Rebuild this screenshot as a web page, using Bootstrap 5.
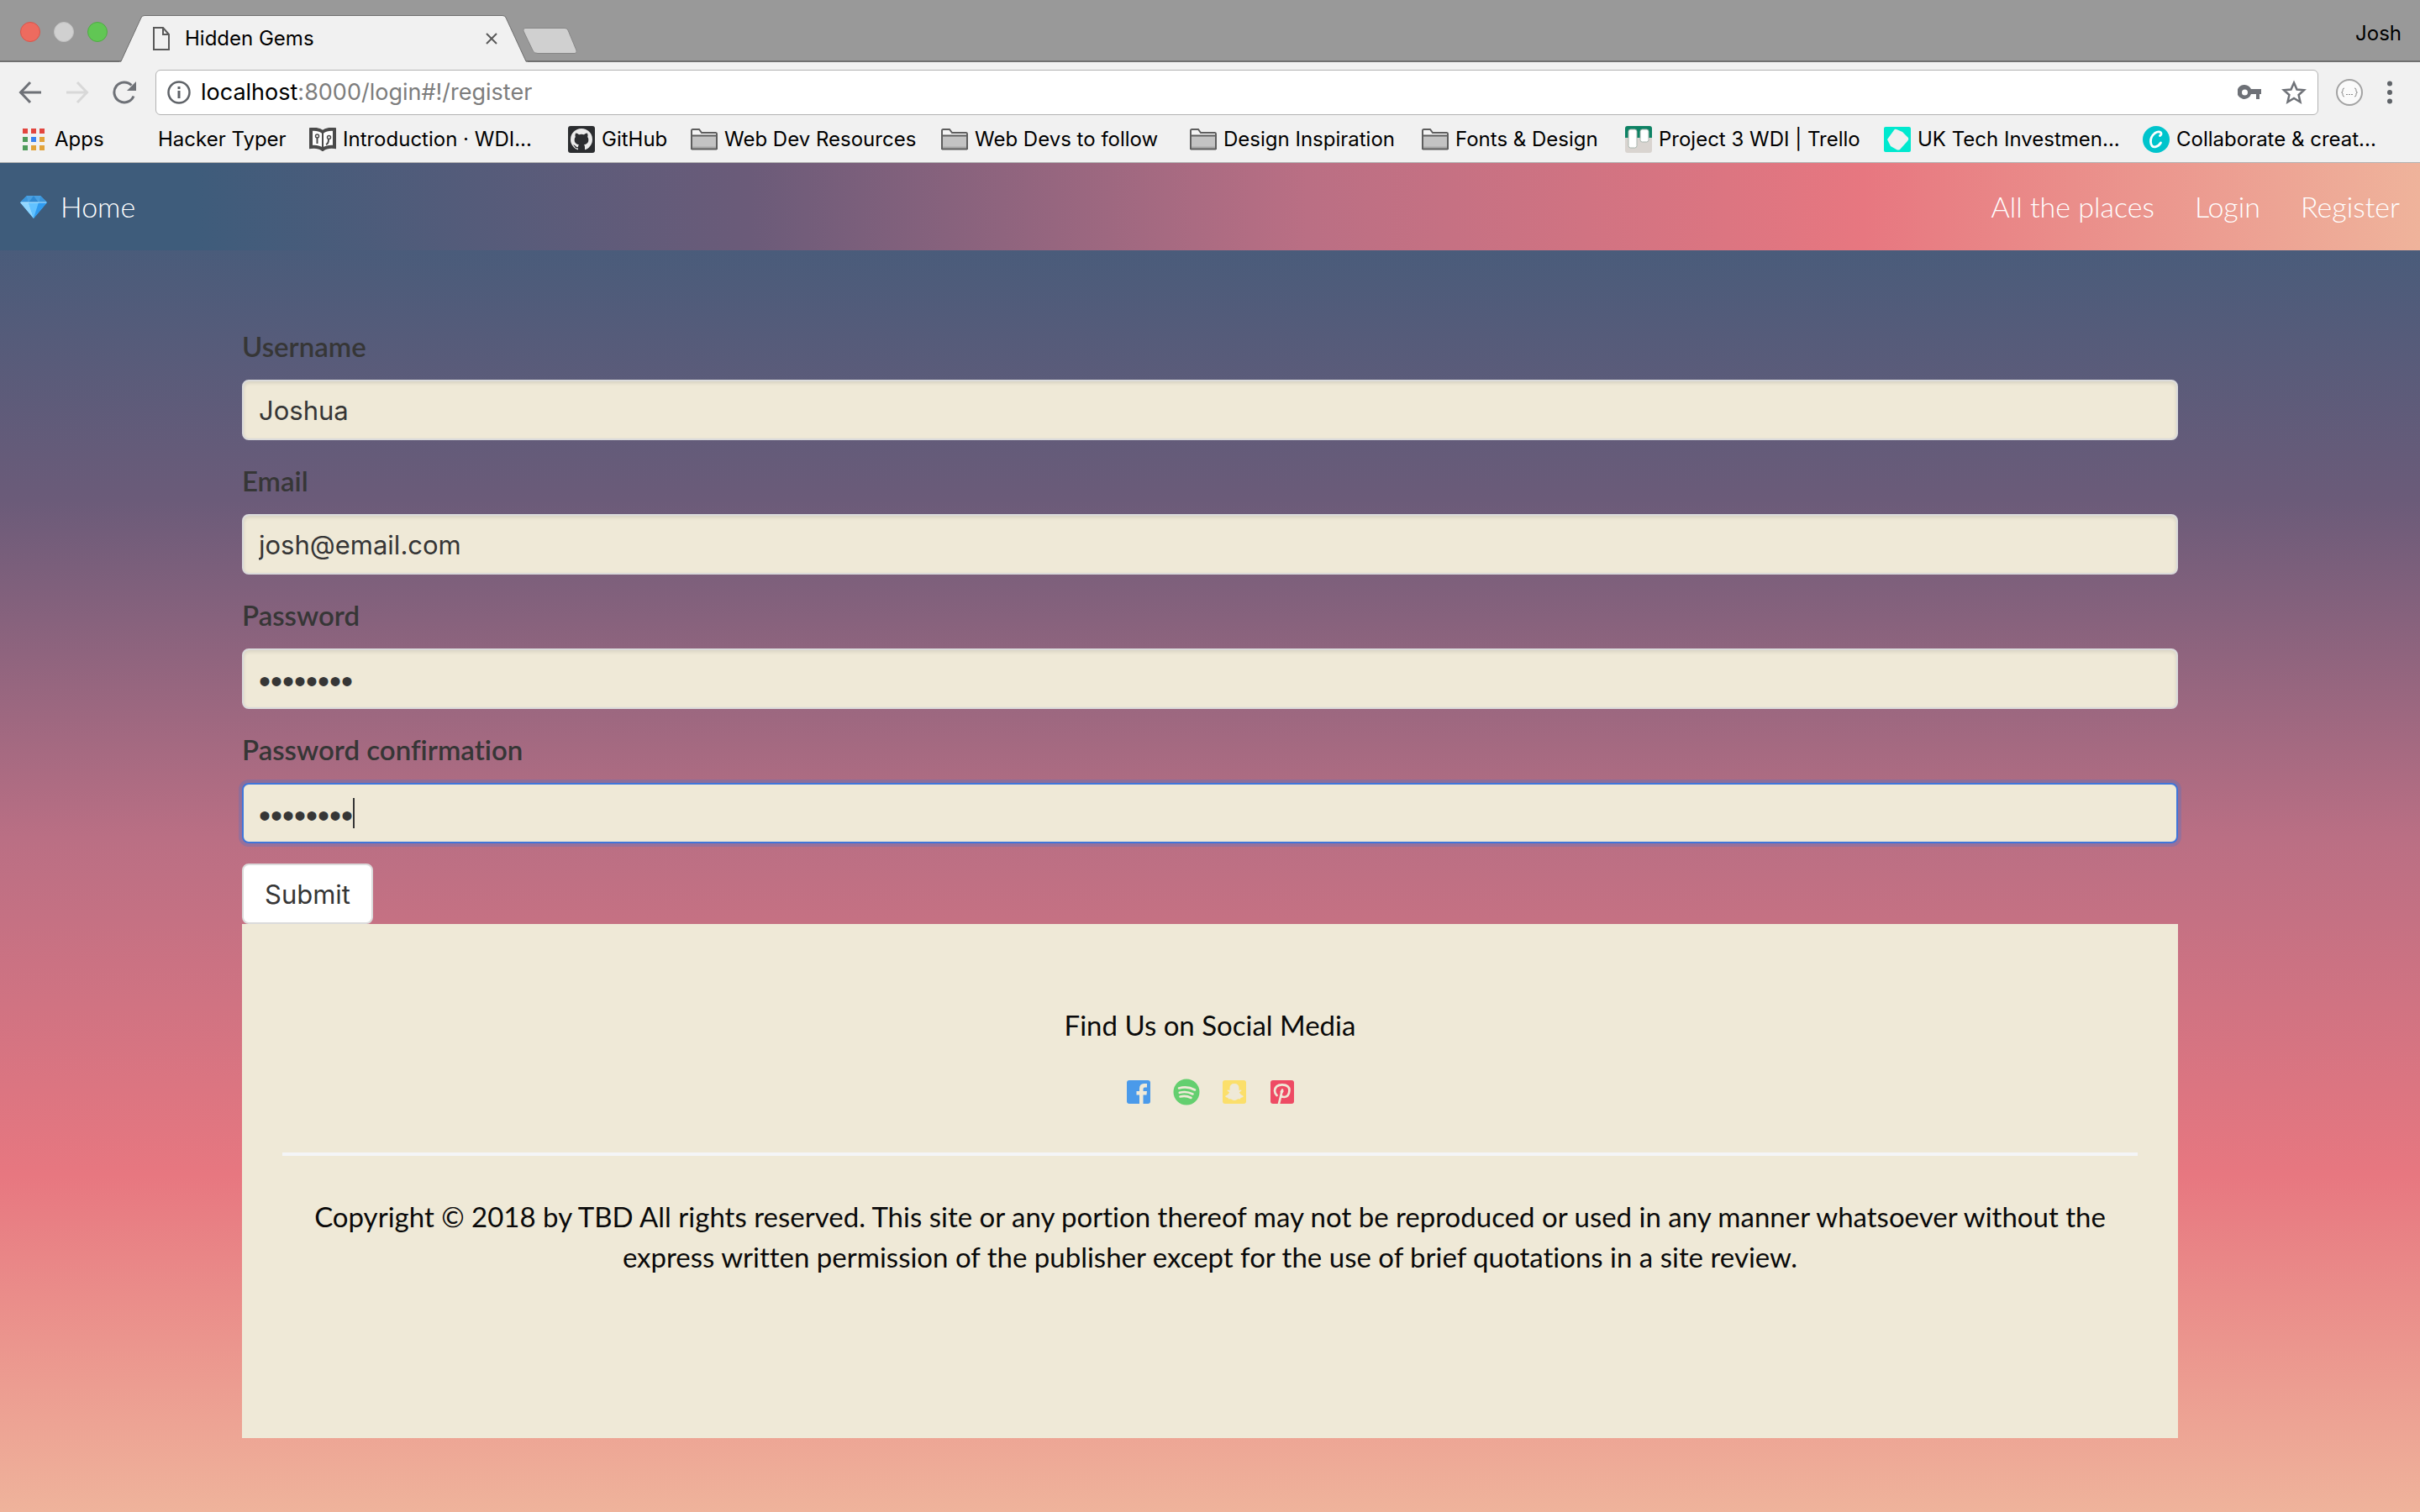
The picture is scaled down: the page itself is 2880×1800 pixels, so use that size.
<!DOCTYPE html>
<html lang="en">
<head>
<meta charset="utf-8">
<meta name="viewport" content="width=device-width, initial-scale=1">
<title>Hidden Gems</title>
<link href="https://cdn.jsdelivr.net/npm/bootstrap@5.3.0/dist/css/bootstrap.min.css" rel="stylesheet">
<style>
  :root { --ink: #363636; --sand: #efe9d7; --bar: #f1f1f1; --glyph: #6e7177; }
  body { font-family: Lato, "Open Sans", sans-serif; font-size: 33px; line-height: 48px; color: #0a0a0a; min-height: 100vh; font-variant-ligatures: none; }
  svg { display: block; flex: none; }

  .chrome-ui { font-family: Inter, Roboto, sans-serif; font-size: 24px; line-height: 32px; color: #000; }
  .tab-strip { height: 74px; background: #999; border-bottom: 2px solid #707070; padding: 18px 22px 0 24px; }
  .lights { gap: 16px; padding-top: 8px; }
  .light { width: 24px; height: 24px; border-radius: 50%; border: 1px solid #c0c0c0; background: #d0d0d0; }
  .light.stop { background: #ed6b5f; border-color: #d8554b; }
  .light.zoom { background: #61c654; border-color: #50ab45; }
  .page-tab { position: relative; width: 486px; height: 56px; margin-left: 14px; margin-bottom: -2px; }
  .page-tab .tab-shape { position: absolute; inset: 0; }
  .page-tab .tab-body { position: relative; height: 56px; padding: 0 36px 0 40px; gap: 18px; }
  .plain-btn { border: 0; padding: 0; background: none; color: inherit; line-height: inherit; }
  .new-tab { margin: 15px 0 0 -6px; }
  .profile { padding-top: 6px; }

  .toolbar { background: var(--bar); padding: 9px 32px 0 22px; }
  .nav-icons { width: 163px; gap: 24px; }
  .omnibox { height: 54px; background: #fff; border: 1px solid #b3b3b3; border-radius: 6px; padding: 0 13px; gap: 12px; font-size: 27px; line-height: 36px; }
  .omnibox .path { color: #7d7d7d; }
  .key-icon { margin-right: 12px; }
  .ext-icon { margin: 0 28px 0 21px; }
  .bookmarks { background: var(--bar); height: 57px; padding: 2px 20px 0 26px; border-bottom: 1px solid #b3b3b3;
    display: grid; grid-template-columns: 122px 220px 308px 146px 298px 296px 276px 242px 308px 308px 1fr; align-items: center; }
  .bookmarks a { display: flex; align-items: center; gap: 8px; color: #000; text-decoration: none; white-space: nowrap; }
  .bm-blank { width: 32px; height: 32px; }

  .sunset { flex: 1; background: linear-gradient(180deg, #3e5c7b, #6b5b79 25%, #ba6f84 50%, #e77780 75%, #efb39b); }
  .site-nav { height: 104px; padding: 0 24px; background: linear-gradient(90deg, #3e5c7b 8%, #6b5b79 31%, #ba6f84 54%, #e77780 77%, #efb39b); font-size: 34px; font-weight: 300; }
  .site-nav a { color: #fff; text-decoration: none; }
  .site-nav .links { gap: 48px; }
  .page-wrap { width: 80%; margin: 0 auto; padding: 90px 0 88px; }
  .field { margin-bottom: 24px; }
  .field label { display: block; font-weight: 600; color: var(--ink); margin-bottom: 16px; }
  .field .form-control, .submit-btn { height: 72px; font: 31px/48px Inter, Roboto, sans-serif; color: var(--ink); border: 2px solid #dbdbdb; border-radius: 8px; }
  .field .form-control { background: var(--sand); padding: 0 18px; box-shadow: inset 0 2px 4px rgba(10,10,10,.1); }
  .field .form-control[type="password"] { font: 40px/48px "Liberation Sans", sans-serif; padding-top: 6px; }
  .field .form-control.active-field { border-color: #3f75da; box-shadow: 0 0 0 4px rgba(50,115,220,.25); }
  .caret { position: absolute; left: 132px; top: 18px; width: 2px; height: 36px; background: var(--ink); }
  .submit-btn { display: block; background: #fff; padding: 2px 25px 0; }
  .site-footer { background: var(--sand); padding: 96px 48px 192px; text-align: center; }
  .social { height: 48px; margin-top: 32px; gap: 25px; }
  .rule { height: 4px; margin: 48px 0; border: 0; background: #f4f5f7; opacity: 1; }
</style>
</head>
<body class="d-flex flex-column">
<svg width="0" height="0" class="position-absolute" aria-hidden="true">
  <symbol id="folder" viewBox="0 0 32 26"><path d="M1 24V2.500Q1 1 2.500 1H10l3 4h17Q31 5 31 6.500V24Z" fill="#f4f4f4" stroke="#5e5e5e" stroke-width="2"/><path d="M2 9h28v14H2z" fill="#c3c3c3"/><path d="M1 8.500h30M1 24.500h30" stroke="#5e5e5e" stroke-width="2"/><path d="M2 22.500h28" stroke="#aaa" stroke-width="2"/></symbol>
</svg>

<header class="chrome-ui">
  <div class="tab-strip d-flex align-items-start">
    <div class="lights d-flex"><span class="light stop"></span><span class="light"></span><span class="light zoom"></span></div>
    <div class="page-tab">
      <svg class="tab-shape" width="486" height="56" viewBox="0 0 486 56"><path d="M0 55.500H2L26 3Q27 .5 30 .5H456Q459 .5 460 3L484 55.500H486V56H0Z" fill="#f1f1f1"/><path d="M0 55H2L26 3Q27 .5 30 .5H456Q459 .5 460 3L484 55H486" fill="none" stroke="#707070"/></svg>
      <div class="tab-body d-flex align-items-center">
        <svg width="20" height="28" viewBox="0 0 20 28" fill="none" stroke="#5a5a5a" stroke-width="2"><path d="M1 1H12L19 9V27H1Z"/><path d="M12 1V9H19"/></svg>
        <span class="flex-grow-1">Hidden Gems</span>
        <button class="plain-btn" aria-label="Close tab"><svg width="14" height="14" viewBox="0 0 14 14" stroke="#5a5a5a" stroke-width="2"><path d="M1 1 13 13M13 1 1 13"/></svg></button>
      </div>
    </div>
    <button class="plain-btn new-tab" aria-label="New tab"><svg width="66" height="32" viewBox="0 0 66 32"><path d="M3 .5H50Q53 .5 54 3L64 27Q65 30.500 62 30.500H18Q14 30.500 12.500 28L1 4Q0 .5 3 .5Z" fill="#d0d0d0" stroke="#878787"/></svg></button>
    <span class="profile ms-auto">Josh</span>
  </div>

  <div class="toolbar d-flex align-items-center">
    <div class="nav-icons d-flex">
      <button class="plain-btn" aria-label="Back"><svg width="28" height="28" viewBox="0 0 28 28" fill="none" stroke="#6e7177" stroke-width="3"><path d="M27 14H3M14 2 2.500 14 14 26"/></svg></button>
      <button class="plain-btn ms-1" aria-label="Forward"><svg width="28" height="28" viewBox="0 0 28 28" fill="none" stroke="#d8d8d8" stroke-width="3"><path d="M1 14H25M14 2 25.500 14 14 26"/></svg></button>
      <button class="plain-btn ms-1" aria-label="Reload"><svg width="28" height="28" viewBox="0 0 28 28"><path d="M25 18.500A12 12 0 1 1 22.500 5.500" fill="none" stroke="#6e7177" stroke-width="3"/><path d="M28 1V12H17Z" fill="#6e7177"/></svg></button>
    </div>
    <div class="omnibox d-flex align-items-center flex-grow-1">
      <svg width="28" height="28" viewBox="0 0 28 28"><circle cx="14" cy="14" r="12.500" fill="none" stroke="#5f6368" stroke-width="2.500"/><path d="M14 12V21M14 7V10" stroke="#5f6368" stroke-width="3"/></svg>
      <span class="flex-grow-1">localhost<span class="path">:8000/login#!/register</span></span>
      <svg class="key-icon" width="28" height="18" viewBox="0 0 28 18"><path fill="#6e7177" fill-rule="evenodd" d="M8.500 0A9 9 0 0 1 16 5H28V11H26V17H22V11H16A8.500 8.500 0 1 1 8.500 0ZM8.500 5.500a3.500 3.500 0 1 0 0 7a3.500 3.500 0 1 0 0-7Z"/></svg>
      <svg width="30" height="30" viewBox="0 0 30 30"><path d="M15 3.500 18.500 11.500 27 12.300 20.600 18 22.500 26.500 15 22 7.500 26.500 9.400 18 3 12.300 11.500 11.500Z" fill="none" stroke="#6e7177" stroke-width="2.500"/></svg>
    </div>
    <svg class="ext-icon" width="32" height="32" viewBox="0 0 32 32"><circle cx="16" cy="16" r="15" fill="#fafafa" stroke="#a2a2a2" stroke-width="2"/><path d="M10 11Q8 11 8 13V15L6.500 16 8 17V19Q8 21 10 21M22 11Q24 11 24 13V15L25.500 16 24 17V19Q24 21 22 21M12 18.500h2M15 18.500h2M18 18.500h2" fill="none" stroke="#8c8c8c"/></svg>
    <svg width="8" height="28" viewBox="0 0 8 28" fill="#5f6368"><circle cx="4" cy="3.500" r="3"/><circle cx="4" cy="14" r="3"/><circle cx="4" cy="24.500" r="3"/></svg>
  </div>

  <nav class="bookmarks" aria-label="Bookmarks">
    <a href="#"><svg class="me-1" width="27" height="27" viewBox="0 0 27 27"><path fill="#e2463f" d="M1 0h6v6H1zM11 0h6v6h-6zM21 0h6v6h-6z"/><path fill="#4f9b5b" d="M1 10h6v6H1zM1 20h6v6H1z"/><path fill="#3b82f0" d="M11 10h6v6h-6z"/><path fill="#e2a33a" d="M21 10h6v6h-6zM11 20h6v6h-6zM21 20h6v6h-6z"/></svg>Apps</a>
    <a href="#"><span class="bm-blank"></span>Hacker Typer</a>
    <a href="#"><svg width="32" height="28" viewBox="0 0 32 28"><path d="M2 2Q11 1 16 5 21 1 30 2V23Q21 22 16 26 11 22 2 23Z" fill="#fff" stroke="#4a4a4a" stroke-width="4"/><path d="M16 5V26M9.500 11V19M20 20Q23 19 23 14" fill="none" stroke="#4a4a4a" stroke-width="2"/><g fill="#fff" stroke="#4a4a4a" stroke-width="1.500"><circle cx="9.500" cy="10" r="2"/><circle cx="23.500" cy="11.500" r="2"/></g></svg>Introduction · WDI...</a>
    <a href="#"><svg width="32" height="32" viewBox="0 0 32 32"><rect width="32" height="32" rx="3" fill="#2b2d30"/><circle cx="16" cy="16" r="13" fill="#ececec"/><path fill="#2b2d30" d="M9 8.500Q11.500 8.500 13 10.200 16 9.500 19 10.200 20.500 8.500 23 8.500 24 11 23.200 13 25 15 24.300 18 23.500 21.500 19 22.200 20 23.500 20 25V29H12V26.500Q8.500 27 7.500 24 7 23 6 22.500 8 22 9 24 10 25.500 12 25 12 23 13 22.200 8.500 21.500 7.700 18 7 15 8.800 13 8 11 9 8.500Z"/></svg>GitHub</a>
    <a href="#"><svg width="32" height="26"><use href="#folder"/></svg>Web Dev Resources</a>
    <a href="#"><svg width="32" height="26"><use href="#folder"/></svg>Web Devs to follow</a>
    <a href="#"><svg width="32" height="26"><use href="#folder"/></svg>Design Inspiration</a>
    <a href="#"><svg width="32" height="26"><use href="#folder"/></svg>Fonts &amp; Design</a>
    <a href="#"><svg width="32" height="32" viewBox="0 0 32 32"><rect width="32" height="32" rx="3" fill="#d9d4d0"/><path d="M3 0H29Q32 0 32 3V14H0V3Q0 0 3 0Z" fill="#0d8264"/><rect x="4" y="4" width="10" height="22" rx="2.500" fill="#fff" stroke="#a9b5ae"/><rect x="18" y="4" width="10" height="15" rx="2.500" fill="#fff" stroke="#a9b5ae"/></svg>Project 3 WDI | Trello</a>
    <a href="#"><svg width="32" height="30" viewBox="0 0 32 30"><rect width="32" height="30" rx="2" fill="#00e9cf"/><path d="M12 4Q13 2 15 3L22 6 29 13Q30 15 28 17L19 27Q17 28 15 27L8 23 4 15Z" fill="#f0f0f0"/></svg>UK Tech Investmen...</a>
    <a href="#"><svg width="32" height="32" viewBox="0 0 32 32"><circle cx="16" cy="16" r="16" fill="#00c4cc"/><path d="M20.500 11.500Q23 10 21.500 7.800 19 5.500 14.500 8.500 9 13 9.500 19 10 25.500 15 24.800 19 24.200 21.500 20" fill="none" stroke="#fff" stroke-width="2.800" stroke-linecap="round"/></svg>Collaborate &amp; creat...</a>
  </nav>
</header>

<div class="sunset">
  <nav class="site-nav d-flex align-items-center justify-content-between">
    <a href="#" class="d-flex align-items-center"><svg class="me-3" width="32" height="28" viewBox="0 0 32 28"><path d="M8 1H24L32 9 16 28 0 9Z" fill="#4db5f5"/><path d="M8 1 0 9H10ZM24 1 32 9H22Z" fill="#3a95dc"/><path d="M8 1 10 9 16 1ZM24 1 22 9 16 1Z" fill="#4a9fe0"/><path d="M16 1 10 9H22Z" fill="#2f88d0"/><path d="M0 9H10L16 28Z" fill="#8fd6ff"/><path d="M10 9H22L16 28Z" fill="#62c2ff"/><path d="M22 9H32L16 28Z" fill="#2f9bf0"/><path d="M1 9H31" stroke="#b8e6ff"/></svg><span>Home</span></a>
    <div class="links d-flex"><a href="#">All the places</a><a href="#">Login</a><a href="#">Register</a></div>
  </nav>

  <main class="page-wrap">
    <form>
      <div class="field"><label for="username">Username</label><input class="form-control" id="username" type="text" value="Joshua"></div>
      <div class="field"><label for="email">Email</label><input class="form-control" id="email" type="email" value="josh@email.com"></div>
      <div class="field"><label for="password">Password</label><input class="form-control" id="password" type="password" value="password"></div>
      <div class="field"><label for="confirm">Password confirmation</label>
        <div class="position-relative"><input class="form-control active-field" id="confirm" type="password" value="password"><span class="caret"></span></div></div>
      <button class="submit-btn" type="button">Submit</button>
    </form>
    <footer class="site-footer">
      <div>Find Us on Social Media</div>
      <div class="social d-flex justify-content-center align-items-center">
        <a href="#" aria-label="Facebook"><svg width="32" height="32" viewBox="0 0 32 32"><rect x="2" y="2" width="28" height="28" rx="3" fill="#4a9aea"/><path fill="#efe9d7" d="M17 30V19.500H13.500V15H17V12Q17 6 22.500 6H26V10.500H23.500Q21.500 10.500 21.500 12.500V15H26L25.500 19.500H21.500V30Z"/></svg></a>
        <a href="#" aria-label="Spotify"><svg width="32" height="32" viewBox="0 0 32 32"><circle cx="16" cy="16" r="15.500" fill="#64cf6f"/><path d="M7 11.500Q17 8.500 26 13.500M7.800 16.800Q16 14.500 23.500 18.500M8.500 21.500Q15.500 19.800 21.500 23" fill="none" stroke="#efe9d7" stroke-width="2.600" stroke-linecap="round"/></svg></a>
        <a href="#" aria-label="Snapchat"><svg width="32" height="32" viewBox="0 0 32 32"><rect x="2" y="2" width="28" height="28" rx="3" fill="#fbdf6b"/><path fill="#efe9d7" d="M16 6Q21.500 6 21.500 11.500V14L24 13.500 24.500 14.500 21.800 16.500Q23.500 20 27 21 26.500 22.500 23.500 23L23 24.500Q20.500 24 19 25 16 27 13 25 11.500 24 9 24.500L8.500 23Q5.500 22.500 5 21 8.500 20 10.200 16.500L7.500 14.500 8 13.500 10.500 14V11.500Q10.500 6 16 6Z"/></svg></a>
        <a href="#" aria-label="Pinterest"><svg width="32" height="32" viewBox="0 0 32 32"><rect x="2" y="2" width="28" height="28" rx="3" fill="#ee4b64"/><path d="M9.500 20Q7 17.500 7 14.500 7.500 7.500 16 7.300 24.500 7.500 24.500 14 24 21.500 18.500 22 15.500 22 14.500 20M16 13.500 12 30" fill="none" stroke="#efe9d7" stroke-width="2.700" stroke-linecap="round"/><path d="M14.500 18Q13 14.500 15.500 13.500 17.500 13.500 17 16Z" fill="#efe9d7" stroke="#efe9d7"/></svg></a>
      </div>
      <hr class="rule">
      <div>Copyright © 2018 by TBD All rights reserved. This site or any portion thereof may not be reproduced or used in any manner whatsoever without the express written permission of the publisher except for the use of brief quotations in a site review.</div>
    </footer>
  </main>
</div>
<script src="https://cdn.jsdelivr.net/npm/bootstrap@5.3.0/dist/js/bootstrap.bundle.min.js"></script>
</body>
</html>
